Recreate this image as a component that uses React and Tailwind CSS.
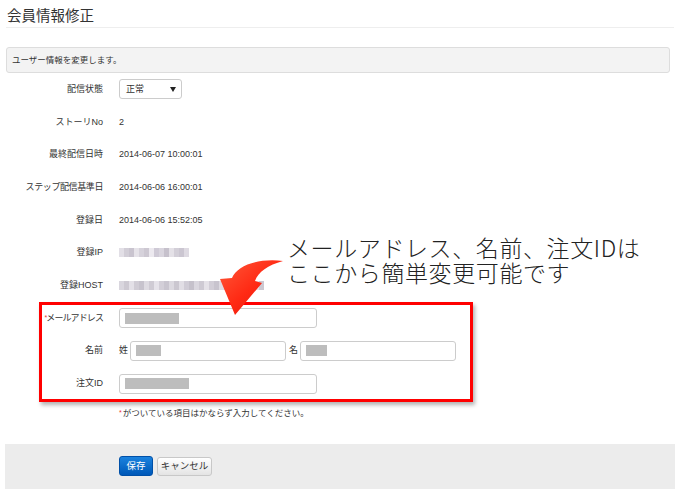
import React from "react";

const FONT = { fontFamily: '"Liberation Sans", "Noto Sans CJK JP", sans-serif' };
const NOTE_FONT = { fontFamily: '"Noto Sans CJK JP", sans-serif' };

function Mosaic({ colors }) {
  return (
    <div className="flex h-[9px]">
      {colors.map((c, i) => (
        <div key={i} className="w-[5px] h-full" style={{ background: c }} />
      ))}
    </div>
  );
}

function Row({ label, children }) {
  return (
    <div className="flex items-center h-[32.7px]">
      <div className="w-[103px] text-right text-[9px] text-[#333] leading-none">{label}</div>
      <div className="ml-[16px] flex items-center text-[9px] text-[#333] leading-none">{children}</div>
    </div>
  );
}

function Field({ w, fillW }) {
  return (
    <div className={`h-[20px] ${w} border border-[#ccc] rounded-[3px] bg-white flex items-center pl-[5px]`}>
      <div className={`h-[11px] ${fillW} bg-[#bdbdbd]`} />
    </div>
  );
}

const ipColors = ["#e2dfe6", "#d2ced7", "#c9c4cf", "#e6e3e9", "#d6d2db", "#cdc8d2", "#ece9ef", "#cfcad6", "#d9d5de", "#c6c1cc", "#e4e1e7", "#d3cfd8", "#cbc6d1", "#dedae2"];
const hostColors = ["#d9d6de", "#cdc9d2", "#e3e0e7", "#d0ccd5", "#c7c3cd", "#dedbe2", "#cfcbd4", "#e6e3ea", "#d3cfd8", "#c9c5cf", "#dcd9e0", "#cbc7d0", "#e1dee5", "#d0ccd6", "#c5c1cb", "#dad7df", "#cecad3", "#e5e2e8", "#d2ced7", "#c8c4ce", "#dedbe2", "#ccc8d1", "#e0dde4", "#d5d1da", "#cac6cf", "#dcd9e0", "#d1cdd6", "#e3e0e6", "#ccc8d1"];

export default function App() {
  return (
    <div className="relative w-[680px] min-h-[495px] bg-white overflow-hidden" style={FONT}>
      {/* Title */}
      <div className="mx-[6px] h-[28px] pt-[4px] border-b border-[#eeeeee]">
        <div className="text-[14.5px] leading-[24px] text-[#333] pl-[1px]">会員情報修正</div>
      </div>

      {/* Alert */}
      <div className="mt-[19px] ml-[6px] w-[664px] h-[26px] bg-[#f3f3f3] border border-[#dddddd] rounded-[3px] flex items-center pl-[5px] text-[8.5px] text-[#333]">
        ユーザー情報を変更します。
      </div>

      {/* Rows */}
      <div className="flex flex-col">
        <Row label="配信状態">
          <div className="w-[63px] h-[20px] border border-[#cccccc] rounded-[3px] bg-white flex items-center justify-between pl-[6px] pr-[5px] text-[9px] text-[#333]">
            <span>正常</span>
            <svg width="6" height="5" viewBox="0 0 6 5"><path d="M0 0 H6 L3 5 Z" fill="#222" /></svg>
          </div>
        </Row>
        <Row label="ストーリNo">2</Row>
        <Row label="最終配信日時">2014-06-07 10:00:01</Row>
        <Row label={<span className="tracking-[-0.4px]">ステップ配信基準日</span>}>2014-06-06 16:00:01</Row>
        <Row label="登録日">2014-06-06 15:52:05</Row>
        <Row label="登録IP"><Mosaic colors={ipColors} /></Row>
        <Row label="登録HOST"><Mosaic colors={hostColors} /></Row>
        <Row label={<span className="tracking-[-0.9px]"><span className="text-[#e33] text-[7px] align-top">*</span>メールアドレス</span>}>
          <Field w="w-[198px]" fillW="w-[54px]" />
        </Row>
        <Row label="名前">
          <span className="w-[9px]">姓</span>
          <div className="ml-[2px]"><Field w="w-[156px]" fillW="w-[25px]" /></div>
          <span className="ml-[3px] w-[9px]">名</span>
          <div className="ml-[2px]"><Field w="w-[156px]" fillW="w-[21px]" /></div>
        </Row>
        <Row label="注文ID">
          <Field w="w-[198px]" fillW="w-[64px]" />
        </Row>
        <div className="flex items-center h-[27px] pl-[119px] text-[8.5px] text-[#333]">
          <span className="text-[#e33] text-[7px] mr-[1px]">*</span>
          がついている項目はかならず入力してください。
        </div>
      </div>

      {/* Footer */}
      <div className="mt-[17px] ml-[5px] w-[670px] h-[45px] bg-[#ececec] flex items-center pl-[114px] gap-[4px]">
        <button className="w-[34px] h-[20px] rounded-[3px] text-white text-[9.5px] bg-gradient-to-b from-[#1b82de] to-[#0058b8] border border-[#0050a8]">保存</button>
        <button className="w-[55px] h-[19px] rounded-[3px] text-[#333] text-[9.5px] bg-gradient-to-b from-[#ffffff] to-[#e4e4e4] border border-[#c8c8c8]">キャンセル</button>
      </div>

      {/* Red annotation box */}
      <div className="absolute left-[39px] top-[302px] w-[434px] h-[100px] border-[3px] border-[#ff0000] shadow-[2px_3px_4px_rgba(0,0,0,0.3)] pointer-events-none" />

      {/* Annotation text */}
      <div className="absolute left-[287px] top-[235px] text-[23px] leading-[24.5px] text-[#222] font-light tracking-[0.6px]" style={NOTE_FONT}>
        <div>メールアドレス、名前、注文IDは</div>
        <div>ここから簡単変更可能です</div>
      </div>

      {/* Arrow */}
      <svg className="absolute left-[215px] top-[255px]" width="75" height="65" viewBox="0 0 75 65">
        <defs>
          <linearGradient id="ag" x1="0" y1="0" x2="1" y2="1">
            <stop offset="0" stopColor="#ff5a3a" />
            <stop offset="0.5" stopColor="#ff2a14" />
            <stop offset="1" stopColor="#e01008" />
          </linearGradient>
        </defs>
        <path
          d="M20 60 L5 24 L17 23 C22 11 42 3 68 6 C53 10 43 17 40 26 L47 28 Z"
          fill="url(#ag)"
        />
      </svg>
    </div>
  );
}
